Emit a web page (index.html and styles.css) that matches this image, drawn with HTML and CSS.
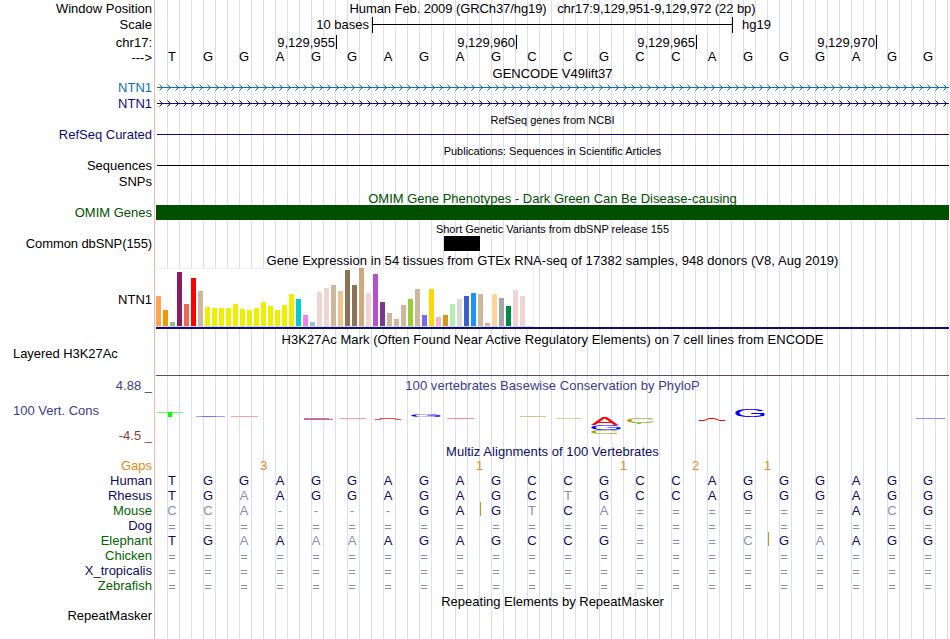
FILE: index.html
```html
<!DOCTYPE html>
<html lang="en">
<head>
    <meta charset="UTF-8" />
    <meta name="viewport" content="width=device-width, initial-scale=1" />
    <title>Human chr17:9,129,951-9,129,972</title>
    <link rel="stylesheet" href="styles.css">
</head>
<body>
    <main class="browser">
        <!-- Position and ruler -->
        <div class="row position">
            <div class="label">Window Position</div>
            <div class="track title">Human Feb. 2009 (GRCh37/hg19) &nbsp; chr17:9,129,951-9,129,972 (22 bp)</div>
        </div>
        <div class="row scale">
            <div class="label">Scale</div>
            <div class="track scale-track">
                <span class="scale-size">10 bases</span>
                <span class="scale-bar"></span>
                <span>hg19</span>
            </div>
        </div>
        <div class="row ruler">
            <div class="label">chr17:</div>
            <div class="track ticks">
                <span>9,129,955</span>
                <span>9,129,960</span>
                <span>9,129,965</span>
                <span>9,129,970</span>
            </div>
        </div>
        <div class="row strand">
            <div class="label">---&gt;</div>
            <div class="track bases" data-seq="TGGAGGAGAGCCGCCAGGGAGG"></div>
        </div>

        <!-- Genes -->
        <div class="row heading gencode-heading"><div class="track title">GENCODE V49lift37</div></div>
        <div class="row gene noncoding">
            <div class="label">NTN1</div>
            <svg class="track" width="793" height="15">
                <defs>
                    <pattern id="arrows" x="3" y="0" width="8" height="15" patternUnits="userSpaceOnUse">
                        <path d="M0.5 4.5L3.5 7.5L0.5 10.5" fill="none" stroke="#0c70b0" />
                    </pattern>
                </defs>
                <rect x="1" y="7" width="792" height="1" fill="#0c70b0" />
                <rect x="1" y="0" width="792" height="15" fill="url(#arrows)" />
            </svg>
        </div>
        <div class="row gene coding">
            <div class="label">NTN1</div>
            <svg class="track" width="793" height="15">
                <defs>
                    <pattern id="arrowsNavy" x="3" y="0" width="8" height="15" patternUnits="userSpaceOnUse">
                        <path d="M0.5 4.5L3.5 7.5L0.5 10.5" fill="none" stroke="#0c0c78" />
                    </pattern>
                </defs>
                <rect x="1" y="7" width="792" height="1" fill="#0c0c78" />
                <rect x="1" y="0" width="792" height="15" fill="url(#arrowsNavy)" />
            </svg>
        </div>
        <div class="row heading small refseq-heading"><div class="track title">RefSeq genes from NCBI</div></div>
        <div class="row coding dense">
            <div class="label">RefSeq Curated</div>
            <div class="track"><div class="line"></div></div>
        </div>
        <div class="row heading small publications"><div class="track title">Publications: Sequences in Scientific Articles</div></div>
        <div class="row sequences">
            <div class="label">Sequences</div>
            <div class="track"><div class="line"></div></div>
        </div>
        <div class="row snps"><div class="label">SNPs</div></div>

        <!-- Variants -->
        <div class="row heading omim omim-heading"><div class="track title">OMIM Gene Phenotypes - Dark Green Can Be Disease-causing</div></div>
        <div class="row omim">
            <div class="label">OMIM Genes</div>
            <div class="track block"></div>
        </div>
        <div class="row heading small dbsnp-heading"><div class="track title">Short Genetic Variants from dbSNP release 155</div></div>
        <div class="row dbsnp">
            <div class="label">Common dbSNP(155)</div>
            <div class="track"><div class="variant"></div></div>
        </div>

        <!-- Expression -->
        <div class="row heading loose"><div class="track title">Gene Expression in 54 tissues from GTEx RNA-seq of 17382 samples, 948 donors (V8, Aug 2019)</div></div>
        <div class="row gtex">
            <div class="label">NTN1</div>
            <div class="track"><div class="chart" id="gtexChart"></div></div>
        </div>
        <div class="row heading loose h3k-heading"><div class="track title">H3K27Ac Mark (Often Found Near Active Regulatory Elements) on 7 cell lines from ENCODE</div></div>
        <div class="row h3k">
            <div class="label wide">Layered H3K27Ac</div>
            <div class="track"></div>
        </div>

        <!-- Conservation -->
        <div class="row phylop">
            <div class="label axis">
                <span class="max">4.88 _</span>
                <span class="name">100 Vert. Cons</span>
                <span class="min">-4.5 _</span>
            </div>
            <div class="track">
                <div class="title loose">100 vertebrates Basewise Conservation by PhyloP</div>
                <svg class="logo" width="793" height="34" viewBox="156 402 793 34">
                    <rect x="157" y="412" width="26" height="1" fill="#5cff5c" />
                    <rect x="168" y="412" width="4" height="5" fill="#00ff00" />
                    <rect x="196" y="416" width="29" height="1" fill="#9c9cff" />
                    <rect x="202" y="416" width="14" height="1" fill="#7474ff" />
                    <rect x="231" y="416" width="27" height="1" fill="#ffa0a0" />
                    <path d="M304 418.5H329" stroke="#ff6a6a" />
                    <path d="M304 419.5H333" stroke="#8c70e0" />
                    <rect x="339" y="418" width="27" height="1" fill="#ff9c9c" />
                    <path d="M375 419.5H381M395 419.5H401M380 418.5H396" stroke="#ff4a4a" />
                    <text class="g" transform="translate(409 417) scale(4.45 0.42)">G</text>
                    <rect x="447" y="418" width="27" height="1" fill="#ff8c8c" />
                    <rect x="520" y="416" width="26" height="1" fill="#cccc80" />
                    <rect x="556" y="418" width="26" height="1" fill="#d0d090" />
                    <text class="a" transform="translate(591 425) scale(4.1 1)">A</text>
                    <text class="g" transform="translate(589 430) scale(4.45 0.68)">G</text>
                    <text class="c" transform="translate(589 434) scale(4.3 0.56)">C</text>
                    <text class="c" transform="translate(625 423) scale(4.3 0.65)">C</text>
                    <rect x="637" y="423" width="4" height="1" fill="#00ff00" />
                    <path d="M699 420.5H704L709 418.5H714L720 420.5H725" fill="none" stroke="#f00" />
                    <text class="g" transform="translate(733 417) scale(4.45 1.08)">G</text>
                    <rect x="916" y="418" width="29" height="1" fill="#8c8cff" />
                </svg>
            </div>
        </div>

        <!-- Alignments, lower case marks a base that differs from human -->
        <div class="row heading loose multiz-heading"><div class="track title">Multiz Alignments of 100 Vertebrates</div></div>
        <div class="row species gaps">
            <div class="label">Gaps</div>
            <div class="track bases" data-seq="  3     1   1 2 1     "></div>
        </div>
        <div class="row species">
            <div class="label">Human</div>
            <div class="track bases" data-seq="TGGAGGAGAGCCGCCAGGGAGG"></div>
        </div>
        <div class="row species">
            <div class="label">Rhesus</div>
            <div class="track bases" data-seq="TGaAGGAGAGCtGCCAGGGAGG"></div>
        </div>
        <div class="row species alt">
            <div class="label">Mouse</div>
            <div class="track bases" data-seq="cca----GAGtCa======AcG" data-insert="9"></div>
        </div>
        <div class="row species">
            <div class="label">Dog</div>
            <div class="track bases" data-seq="======================"></div>
        </div>
        <div class="row species alt">
            <div class="label">Elephant</div>
            <div class="track bases" data-seq="TGaAaaAGAGCCG===cGaAGG" data-insert="17"></div>
        </div>
        <div class="row species alt">
            <div class="label">Chicken</div>
            <div class="track bases" data-seq="======================"></div>
        </div>
        <div class="row species">
            <div class="label">X_tropicalis</div>
            <div class="track bases" data-seq="======================"></div>
        </div>
        <div class="row species alt">
            <div class="label">Zebrafish</div>
            <div class="track bases" data-seq="======================"></div>
        </div>
        <div class="row heading repeat-heading"><div class="track title">Repeating Elements by RepeatMasker</div></div>
        <div class="row"><div class="label">RepeatMasker</div></div>
    </main>
    <script src="script.js"></script>
</body>
</html>
```

FILE: styles.css
```css
body {
    margin: 0;
    background-color: #fff;
    color: #000;
    font-family: "Liberation Sans", Arial, sans-serif;
    font-size: 13px;
    line-height: 15px;
}

.browser {
    box-sizing: border-box;
    width: 949px;
    height: 639px;
    padding-top: 1px;
    overflow: hidden;
    /* red divider, then a guide every 12px */
    background-image:
        linear-gradient(#ffb4b4, #ffb4b4),
        repeating-linear-gradient(to right, transparent 0, transparent 11px, #dcdcfa 11px, #dcdcfa 12px);
    background-size: 1px 100%, 793px 100%;
    background-position: 154px 0, 156px 0;
    background-repeat: no-repeat;
}

/* Rows */
.row {
    display: flex;
    height: 15px;
    white-space: nowrap;
}
.label {
    flex: none;
    width: 152px;
    margin-right: 4px;
    text-align: right;
}
.track {
    flex: none;
    width: 793px;
}
.title {
    text-align: center;
}
.heading {
    justify-content: flex-end;
}
.loose {
    letter-spacing: 0.05px;
}
.small {
    box-sizing: border-box;
    font-size: 11px;
}
.line {
    height: 1px;
    margin-top: 7px;
    margin-left: 1px;
    background-color: currentColor;
}

/* Position and ruler */
.position {
    height: 17px;
}
.position .title {
    letter-spacing: -0.08px;
}
.scale {
    height: 17px;
}
.scale .label,
.scale-size {
    margin-top: -1px;
}
.scale-track {
    display: flex;
}
.scale-track span:last-child {
    margin-top: -1px;
}
.scale-size {
    width: 213px;
    margin-right: 3px;
    text-align: right;
}
.scale-bar {
    box-sizing: border-box;
    width: 361px;
    height: 16px;
    margin-top: -1px;
    margin-right: 9px;
    border-left: 1px solid #000;
    border-right: 1px solid #000;
    background: linear-gradient(#000, #000) 0 7px / 100% 1px no-repeat;
}
.ruler {
    height: 14px;
}
.ticks {
    display: flex;
}
.ticks span {
    box-sizing: border-box;
    width: 180px;
    height: 14px;
    padding-right: 1px;
    border-right: 1px solid #000;
    text-align: right;
}
.ticks span:first-child {
    width: 181px;
}
.strand {
    height: 17px;
}
.strand .label {
    padding-top: 1px;
}

/* Genes */
.gencode-heading {
    height: 14px;
}
.gene {
    height: 16px;
}
.noncoding {
    color: #0c70b0;
}
.coding {
    color: #0c0c78;
}
.refseq-heading {
    padding-top: 1px;
}
.publications {
    height: 16px;
    padding-top: 2px;
}
.sequences {
    height: 16px;
}
.snps {
    height: 17px;
}

/* Variants */
.omim {
    color: #005000;
}
.omim-heading {
    height: 14px;
}
.block {
    background-color: #005000;
}
.dbsnp-heading {
    height: 16px;
    padding-top: 2px;
}
.dbsnp {
    height: 17px;
}
.dbsnp .label {
    letter-spacing: -0.1px;
}
.variant {
    width: 36px;
    height: 15px;
    margin-left: 288px;
    background-color: #000;
}

/* Expression */
.gtex {
    height: 64px;
}
.gtex .label {
    padding-top: 24px;
}
.gtex .track {
    box-sizing: border-box;
    height: 61px;
    border-bottom: 2px solid #0c0c78;
}
.chart {
    box-sizing: border-box;
    display: flex;
    align-items: flex-end;
    gap: 2px;
    width: 378px;
    height: 59px;
    border-top: 1px solid #f0f0f0;
    border-right: 1px solid #f0f0f0;
    border-bottom: 1px solid #d8d8e0;
    background-color: #fff;
}
.chart div {
    width: 5px;
}
.h3k-heading {
    height: 14px;
}
.h3k {
    height: 31px;
}
.label.wide {
    box-sizing: border-box;
    padding-left: 13px;
    text-align: left;
    letter-spacing: -0.05px;
}
.h3k .track {
    height: 29px;
    border-bottom: 1px solid #5c4678;
}

/* Conservation */
.phylop {
    height: 67px;
    color: #3c3c8c;
}
.axis {
    display: flex;
    flex-direction: column;
    gap: 10px;
    padding-top: 1px;
}
.axis .name {
    padding-left: 13px;
    text-align: left;
}
.axis .min {
    color: #8c3c3c;
}
.phylop .title {
    height: 25px;
    padding-top: 1px;
    box-sizing: border-box;
}
.logo {
    display: block;
}
.logo text {
    font-size: 10px;
}
.logo .a {
    fill: #f00;
}
.logo .c {
    fill: #a0a000;
}
.logo .g {
    fill: #00f;
}

/* Alignments */
.multiz-heading {
    height: 14px;
    color: #0c0c64;
}
.species {
    color: #0c0c64;
}
.species.alt .label {
    color: #006400;
}
.species.gaps {
    color: #e08c14;
}
.bases {
    display: grid;
    grid-template-columns: repeat(22, 36px);
    margin-left: -2px;
    text-align: center;
}
.gaps .bases {
    margin-left: 17.5px;
}
.species .bases {
    color: #0c0c64;
}
.gaps.species .bases {
    color: #e08c14;
}
.species .bases .light {
    color: #8c8cb8;
}
.bases .equal {
    padding-top: 1px;
}
.insert {
    position: relative;
}
.insert::before {
    content: "";
    position: absolute;
    top: -1px;
    left: 2px;
    width: 1px;
    height: 14px;
    background-color: #e08c14;
}
.repeat-heading {
    height: 14px;
    padding-top: 1px;
}
```

FILE: script.js
```js
const tissues = [
    [30, '#ffa54f'], [16, '#ee9a00'], [4, '#8fbc8f'], [54, '#8b1c62'], [22, '#ee6a50'],
    [48, '#ff0000'], [35, '#cdb79e'], [19, '#eeee00'], [18, '#eeee00'], [18, '#eeee00'],
    [18, '#eeee00'], [22, '#eeee00'], [17, '#eeee00'], [16, '#eeee00'], [18, '#eeee00'],
    [24, '#eeee00'], [20, '#eeee00'], [16, '#eeee00'], [21, '#eeee00'], [32, '#eeee00'],
    [27, '#00cdcd'], [11, '#ee82ee'], [4, '#9ac0cd'], [34, '#eed5d2'], [38, '#eed5d2'],
    [41, '#cdb79e'], [35, '#eec591'], [56, '#8b7355'], [41, '#8b7355'], [58, '#cdaa7d'],
    [33, '#eed5d2'], [52, '#b452cd'], [24, '#7a378b'], [13, '#cdb79e'], [7, '#cdb79e'],
    [21, '#cdb79e'], [27, '#9acd32'], [37, '#cdb79e'], [11, '#7a67ee'], [37, '#ffd700'],
    [9, '#ffb6c1'], [11, '#cd9b1d'], [22, '#b4eeb4'], [27, '#d9d9d9'], [30, '#3a5fcd'],
    [33, '#1e90ff'], [32, '#cdb79e'], [3, '#cdb79e'], [32, '#ffd39b'], [28, '#a6a6a6'],
    [20, '#008b45'], [36, '#eed5d2'], [30, '#eed5d2'], [0, '#ff00ff']
];

const chart = document.getElementById('gtexChart');
tissues.forEach(([height, color]) => {
    const bar = document.createElement('div');
    bar.style.height = height + 'px';
    bar.style.backgroundColor = color;
    chart.appendChild(bar);
});

document.querySelectorAll('.bases').forEach(track => {
    const insert = Number(track.dataset.insert || -1);
    track.dataset.seq.split('').forEach((base, i) => {
        const cell = document.createElement('span');
        cell.textContent = base.toUpperCase();
        if (/[a-z=-]/.test(base)) cell.classList.add('light');
        if (base === '=') cell.classList.add('equal');
        if (i === insert) cell.classList.add('insert');
        track.appendChild(cell);
    });
});
```
